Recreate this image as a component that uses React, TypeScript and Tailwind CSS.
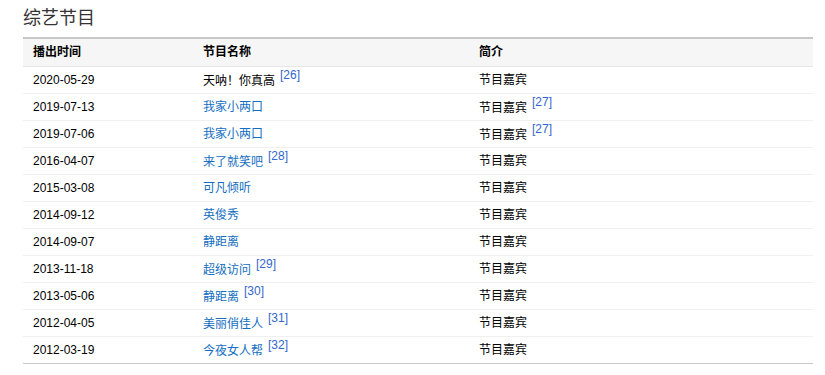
const rows: { date: string; name: string; link: boolean; ref?: string; descRef?: string }[] = [
  { date: '2020-05-29', name: '天呐！你真高', link: false, ref: '26' },
  { date: '2019-07-13', name: '我家小两口', link: true, descRef: '27' },
  { date: '2019-07-06', name: '我家小两口', link: true, descRef: '27' },
  { date: '2016-04-07', name: '来了就笑吧', link: true, ref: '28' },
  { date: '2015-03-08', name: '可凡倾听', link: true },
  { date: '2014-09-12', name: '英俊秀', link: true },
  { date: '2014-09-07', name: '静距离', link: true },
  { date: '2013-11-18', name: '超级访问', link: true, ref: '29' },
  { date: '2013-05-06', name: '静距离', link: true, ref: '30' },
  { date: '2012-04-05', name: '美丽俏佳人', link: true, ref: '31' },
  { date: '2012-03-19', name: '今夜女人帮', link: true, ref: '32' },
];

function Ref({ n }: { n: string }) {
  return (
    <sup className="relative -top-[1px] ml-[5px] text-[12px] text-[#3366cc] align-super leading-none">[{n}]</sup>
  );
}

export default function App() {
  return (
    <div
      className="w-[825px] h-[375px] bg-white pl-[23px] pr-[12px]"
      style={{ fontFamily: '"Liberation Sans", Arial, "Noto Sans CJK SC", sans-serif' }}
    >
      <h2
        className="h-[37px] pt-[4px] text-[18px] leading-[24px] text-[#333] font-normal"
        style={{ fontFamily: '"Noto Sans CJK SC", sans-serif' }}
      >
        综艺节目
      </h2>
      <table className="w-[790px] table-fixed border-collapse text-[12px] text-black border-t-2 border-t-[#c8c8c8] border-b border-b-[#c8c8c8]">
        <colgroup>
          <col className="w-[170px]" />
          <col className="w-[276px]" />
          <col />
        </colgroup>
        <thead>
          <tr className="h-[28px] bg-[#f6f6f6] border-b border-[#e6e6e6]">
            <th className="px-[10px] text-left font-bold">播出时间</th>
            <th className="px-[10px] text-left font-bold">节目名称</th>
            <th className="px-[10px] text-left font-bold">简介</th>
          </tr>
        </thead>
        <tbody>
          {rows.map((r, i) => (
            <tr key={i} className={'h-[27px] ' + (i < rows.length - 1 ? 'border-b border-[#f0f0f0]' : '')}>
              <td className="px-[10px]">{r.date}</td>
              <td className="px-[10px]">
                <span className={r.link ? 'text-[#136ec2]' : 'text-black'}>{r.name}</span>
                {r.ref && <Ref n={r.ref} />}
              </td>
              <td className="px-[10px]">
                节目嘉宾
                {r.descRef && <Ref n={r.descRef} />}
              </td>
            </tr>
          ))}
        </tbody>
      </table>
    </div>
  );
}
